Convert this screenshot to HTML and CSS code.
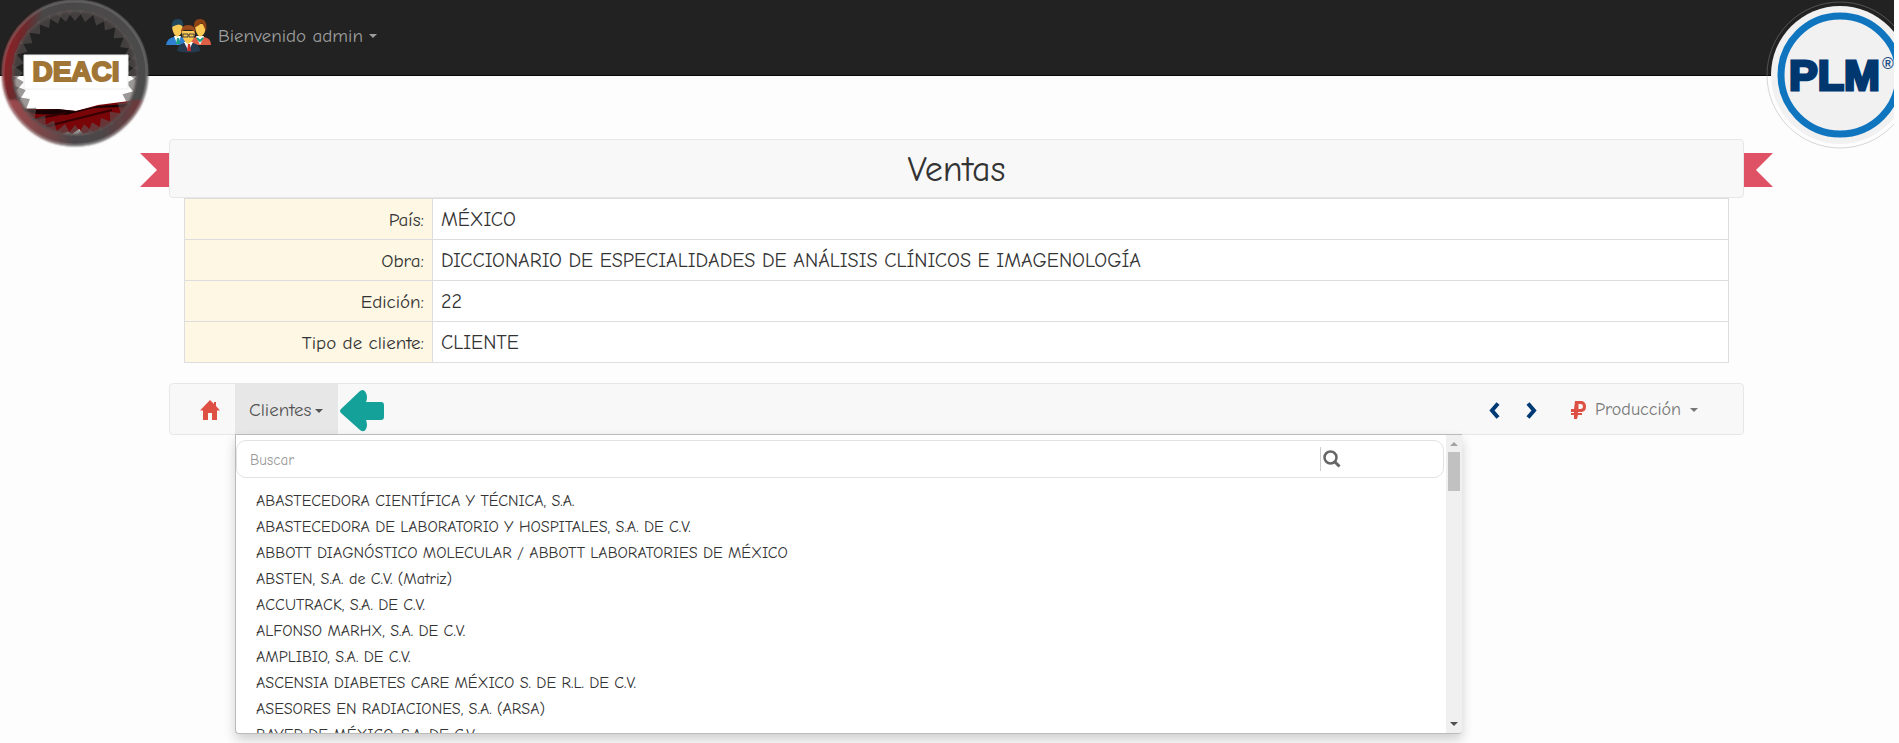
FILE: index.html
```html
<!DOCTYPE html>
<html lang="es">
<head>
<meta charset="utf-8">
<title>Ventas</title>
<link rel="stylesheet" href="styles.css">
</head>
<body>
<header class="topbar">
  <a class="brand brand-left" href="#" aria-label="DEACI">
    <svg width="150" height="148" viewBox="0 0 150 148">
      <defs>
        <linearGradient id="ring" x1="0" y1="0.3" x2="1" y2="0.5">
          <stop offset="0" stop-color="#8c2226"/><stop offset="0.1" stop-color="#6c2a2d"/><stop offset="0.2" stop-color="#4a4646"/><stop offset="1" stop-color="#4c4c4c"/>
        </linearGradient>
        <linearGradient id="low" x1="0" y1="0" x2="1" y2="0">
          <stop offset="0" stop-color="#a04a4e"/><stop offset="0.35" stop-color="#6a4648"/><stop offset="0.5" stop-color="#484648"/><stop offset="0.7" stop-color="#4d4648"/><stop offset="1" stop-color="#70383b"/>
        </linearGradient>
        <clipPath id="disc"><circle cx="75" cy="73" r="66"/></clipPath>
        <clipPath id="lowhalf"><path d="M0 100H150V148H0z"/></clipPath>
        <filter id="soft"><feGaussianBlur stdDeviation="1"/></filter>
        <path id="tooth" d="M66 10H84L75 21z"/>
        <g id="teeth">
          <use href="#tooth"/><use href="#tooth" transform="rotate(11 75 73)"/><use href="#tooth" transform="rotate(24 75 73)"/>
          <use href="#tooth" transform="rotate(35 75 73)"/><use href="#tooth" transform="rotate(48 75 73)"/><use href="#tooth" transform="rotate(60 75 73)"/>
          <use href="#tooth" transform="rotate(71 75 73)"/><use href="#tooth" transform="rotate(80 75 73)"/>
        </g>
      </defs>
      <g clip-path="url(#disc)">
        <path d="M0 0H150V76H0z" fill="#222"/>
        <path d="M0 76H150V148H0z" fill="#fff"/>
        <path d="M14 109L56 109L76 111L98 105L144 99V140H14z" fill="#7a0508"/>
        <path d="M20 110L58 109L76 111L98 106L128 104L124 107L94 108L66 115L36 114z" fill="#180203"/>
        <path d="M30 120L66 113M40 128L112 110" stroke="#350204" stroke-width="2"/>
        <path d="M60 135L68 132L72 134L79 129L83 134L90 133L84 142H66z" fill="#eee"/>
      </g>
      <g fill="none" filter="url(#soft)">
        <circle cx="75" cy="73" r="67" stroke="url(#ring)" stroke-width="12"/>
        <circle cx="75" cy="73" r="67" stroke="url(#low)" stroke-width="12" clip-path="url(#lowhalf)"/>
      </g>
      <g fill="#5c5454" fill-opacity=".6">
        <use href="#teeth"/><use href="#teeth" transform="rotate(90 75 73)"/><use href="#teeth" transform="rotate(180 75 73)"/><use href="#teeth" transform="rotate(270 75 73)"/>
      </g>
      <circle cx="75" cy="73" r="72" fill="none" stroke="#aaa" stroke-opacity=".25" stroke-width="3"/>
      <path d="M24 55H128V89H24z" fill="#fff" stroke="#eee"/>
      <text x="76" y="81" text-anchor="middle" class="deaci">DEACI</text>
    </svg>
  </a>
  <button class="user" type="button">
    <svg width="46" height="36" viewBox="0 0 46 36">
      <path d="M0 27Q1 20 8 19H15Q22 20 22 27z" fill="#2f80d0"/><path d="M8 18L11.500 27L15 18z" fill="#fff"/><path d="M11 20H13L14 26H10z" fill="#1aa085"/>
      <path d="M24 27Q25 20 30 19H38Q45 20 45 27z" fill="#dd5f45"/><path d="M30 18L34 27L38 18z" fill="#fff"/><path d="M31 20L34 23L37 20" fill="none" stroke="#1aa085" stroke-width="2"/>
      <path d="M6 6Q6 16 11 19Q17 17 17 6z" fill="#fcc954"/><path d="M6 9Q5 1 12 1Q18 1 17 9Q14 4 6 9z" fill="#24475e"/>
      <path d="M29 6Q29 16 34 19Q40 17 40 6z" fill="#fcc954"/><path d="M28 10Q27 1 34 1Q42 1 40 14Q38 8 36 5Q32 8 28 10z" fill="#8d4214"/>
      <path d="M11 33Q12 26 18 25H27Q34 26 34 33Q23 36 11 33z" fill="#253b50"/><path d="M18 24L22.500 33L27 24z" fill="#fff"/><path d="M22 26H24L25 33H21z" fill="#c9302c"/>
      <path d="M16 13Q16 23 22 26Q29 23 29 13z" fill="#fcc954"/><path d="M15 15Q15 7 22 7Q30 7 29 15Q27 11 22 12Q17 11 15 15z" fill="#9b4b1c"/>
      <path d="M17 16H22V19H17zM23 16H28V19H23z" fill="none" stroke="#49423a"/>
    </svg>
    <span>Bienvenido admin</span><i class="caret"></i>
  </button>
  <a class="brand brand-right" href="#" aria-label="PLM">
    <svg width="128" height="150" viewBox="0 0 128 150">
      <circle cx="74" cy="75" r="73" fill="none" stroke="#9a9a9a" stroke-opacity=".4"/>
      <circle cx="74" cy="75" r="69" fill="#f1f1f2"/>
      <circle cx="74" cy="75" r="59" fill="#f1f1f2" stroke="#0f75bf" stroke-width="7"/>
      <text x="23" y="90" class="plm">PLM</text>
      <text x="116" y="69" class="reg">®</text>
    </svg>
  </a>
</header>

<main class="page">
  <div class="ribbon">
    <svg class="tail" width="29" height="34" viewBox="0 0 29 34"><path d="M0 0H29V34H0L17 17z"/></svg>
    <h1 class="title">Ventas</h1>
    <svg class="tail tail-right" width="29" height="34" viewBox="0 0 29 34"><path d="M29 0H0V34H29L12 17z"/></svg>
  </div>

  <table class="info">
    <tbody>
      <tr><th scope="row">País:</th><td>MÉXICO</td></tr>
      <tr><th scope="row">Obra:</th><td>DICCIONARIO DE ESPECIALIDADES DE ANÁLISIS CLÍNICOS E IMAGENOLOGÍA</td></tr>
      <tr><th scope="row">Edición:</th><td>22</td></tr>
      <tr><th scope="row">Tipo de cliente:</th><td>CLIENTE</td></tr>
    </tbody>
  </table>

  <nav class="menu">
    <a class="home" href="#" aria-label="Inicio">
      <svg width="20" height="20" viewBox="0 0 20 20"><path d="M10 0L0 10.500H3V20H8V13H12V20H17V10.500H20L16 6V2H14V4z" fill="#de5044"/></svg>
    </a>
    <div class="clients">
      <button class="clients-toggle" type="button" aria-expanded="true">Clientes<i class="caret"></i></button>
      <div class="dropdown">
        <div class="dropdown-body">
          <div class="search">
            <input type="text" placeholder="Buscar" aria-label="Buscar">
            <button class="search-go" type="button" aria-label="Buscar cliente">
              <svg width="18" height="18" viewBox="0 0 18 18" fill="none" stroke="#666"><circle cx="7.500" cy="7.500" r="6" stroke-width="2.500"/><path d="M11.500 11.500L16.500 16.500" stroke-width="3"/></svg>
            </button>
          </div>
          <ul class="list">
            <li><a href="#">ABASTECEDORA CIENTÍFICA Y TÉCNICA, S.A.</a></li>
            <li><a href="#">ABASTECEDORA DE LABORATORIO Y HOSPITALES, S.A. DE C.V.</a></li>
            <li><a href="#">ABBOTT DIAGNÓSTICO MOLECULAR / ABBOTT LABORATORIES DE MÉXICO</a></li>
            <li><a href="#">ABSTEN, S.A. de C.V. (Matriz)</a></li>
            <li><a href="#">ACCUTRACK, S.A. DE C.V.</a></li>
            <li><a href="#">ALFONSO MARHX, S.A. DE C.V.</a></li>
            <li><a href="#">AMPLIBIO, S.A. DE C.V.</a></li>
            <li><a href="#">ASCENSIA DIABETES CARE MÉXICO S. DE R.L. DE C.V.</a></li>
            <li><a href="#">ASESORES EN RADIACIONES, S.A. (ARSA)</a></li>
            <li><a href="#">BAYER DE MÉXICO, S.A. DE C.V.</a></li>
          </ul>
        </div>
        <div class="scroll" aria-hidden="true">
          <i class="arrow arrow-up"></i><i class="thumb"></i><i class="arrow arrow-down"></i>
        </div>
      </div>
    </div>
    <svg class="pointer" width="44" height="43" viewBox="0 0 44 43"><path d="M1 20L20 2Q24-1 26 4Q28 8 26 13H41Q44 13 44 16V28Q44 31 41 31H26Q28 36 26 40Q24 44 20 41L1 24Q-1 22 1 20z" fill="#14a19a"/></svg>
    <div class="tools">
      <a href="#" aria-label="Anterior"><svg width="11" height="17" viewBox="0 0 11 17"><path d="M9 1.500L3 8.500L9 15.500" fill="none" stroke="#003a75" stroke-width="4"/></svg></a>
      <a href="#" aria-label="Siguiente"><svg width="11" height="17" viewBox="0 0 11 17"><path d="M2 1.500L8 8.500L2 15.500" fill="none" stroke="#003a75" stroke-width="4"/></svg></a>
      <button class="production" type="button">
        <svg width="15" height="18" viewBox="0 0 15 18"><path d="M4 0H11Q15 1 15 5.500Q15 10 11 11H7V12H11V14H7L6 18H3V14H0V12H3V11H0V8H3zM7.500 3V8H10Q12 7.500 12 5.500Q12 3 10 3z" fill="#de5044" fill-rule="evenodd"/></svg>
        <span>Producción</span><i class="caret"></i>
      </button>
    </div>
  </nav>
</main>
</body>
</html>
```
FILE: styles.css
```css
* { box-sizing: border-box; }
body {
  margin: 0;
  min-height: 100vh;
  background: #fdfdfd;
  color: #333;
  font: 19px/26px "Comic Sans MS", "Comic Neue", "Open Sans", sans-serif;
  overflow: hidden;
}
a { color: inherit; text-decoration: none; }
button { font: inherit; color: inherit; background: none; border: 0; padding: 0; }
svg { display: block; flex: none; }

.topbar {
  position: relative;
  height: 76px;
  margin-right: 5px;
  padding-left: 166px;
  background: #222;
  border-bottom: 1px solid #080808;
}
.brand { position: absolute; top: 0; z-index: 2; }
.brand-left { left: 0; }
.brand-right { right: 0; }
.deaci { font: 900 28px "Liberation Sans", sans-serif; fill: #a07536; stroke: #a07536; stroke-width: 2px; }
.plm { font: 900 43px "Liberation Sans", sans-serif; fill: #00376f; stroke: #00376f; stroke-width: 3px; }
.reg { font: bold 16px "Liberation Sans", sans-serif; fill: #1c4f86; }
.user { display: flex; align-items: center; gap: 6px; height: 72px; color: #9d9d9d; }
.caret {
  display: inline-block;
  border: 4px solid transparent;
  border-top-color: currentColor;
  border-bottom: 0;
  vertical-align: middle;
}

.page { padding: 63px 155px 0 169px; }
.ribbon { position: relative; }
.title {
  margin: 0;
  height: 59px;
  border: 1px solid #e7e7e7;
  border-radius: 4px;
  background: #f8f8f8;
  font-size: 36px;
  font-weight: 400;
  line-height: 60px;
  text-align: center;
}
.tail { position: absolute; top: 14px; right: 100%; fill: #df5165; }
.tail-right { right: auto; left: 100%; }

.info { width: calc(100% - 30px); margin: 0 15px; border-collapse: collapse; background: #fff; }
.info th, .info td { height: 41px; padding: 2px 8px 0; border: 1px solid #ddd; font-weight: 400; text-align: left; }
.info th { width: 248px; background: #fdf7e3; text-align: right; }
.info td { font-size: 20px; }

.menu {
  display: flex;
  align-items: center;
  height: 52px;
  margin-top: 20px;
  border: 1px solid #e7e7e7;
  border-radius: 4px;
  background: #f8f8f8;
}
.home { padding: 2px 15px 0 30px; }
.clients { position: relative; align-self: stretch; }
.clients-toggle { height: 50px; padding: 2px 15px 0 14px; background: #e7e7e7; color: #555; }
.clients-toggle .caret { margin-left: 4px; }
.pointer { margin: 3px 0 0 2px; }
.dropdown {
  position: absolute;
  top: 50px;
  left: 0;
  z-index: 3;
  display: flex;
  width: calc(100vw - 672px);
  height: 300px;
  border: 1px solid #bbb;
  border-right: 0;
  border-radius: 0 0 4px 4px;
  background: #fff;
  box-shadow: 0 6px 12px rgba(0, 0, 0, .18);
  overflow: hidden;
}
.dropdown-body { flex: 1; padding-top: 5px; }
.search {
  display: flex;
  align-items: center;
  height: 38px;
  margin-right: 2px;
  padding: 0 102px 0 13px;
  border: 1px solid #e2e2e2;
  border-radius: 10px;
}
.search input { flex: 1; border: 0; outline: 0; padding: 2px 0 0; background: none; font: inherit; font-size: 15px; }
.search input::placeholder { color: #999; opacity: 1; }
.search-go { height: 24px; padding-left: 2px; border-left: 1px solid #ccc; }
.list { margin: 10px 0 0; padding: 0 0 0 20px; list-style: none; font-size: 16px; }
.scroll { display: flex; flex-direction: column; align-items: center; width: 16px; padding: 7px 0; background: #f0f0f0; }
.arrow { border: 4px solid transparent; }
.arrow-up { border-top: 0; border-bottom-color: #a3a3a3; }
.arrow-down { margin-top: auto; border-bottom: 0; border-top-color: #505050; }
.thumb { width: 12px; height: 39px; margin-top: 6px; background: #c1c1c1; }

.tools { display: flex; align-items: center; gap: 26px; margin-left: auto; padding: 2px 45px 0 0; color: #777; }
.production { display: flex; align-items: center; gap: 9px; margin-left: 8px; font-size: 18px; }
```
